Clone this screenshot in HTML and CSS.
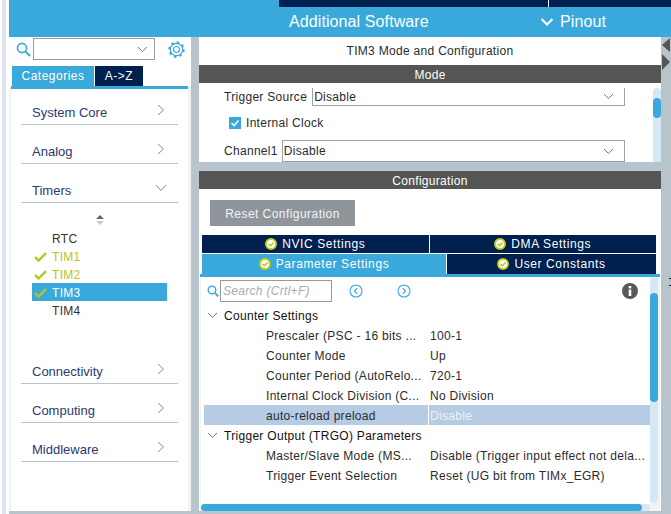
FILE: index.html
```html
<!DOCTYPE html>
<html>
  <head>
    <meta charset="utf-8">
    <title>TIM3 Mode and Configuration</title>
    <link rel="stylesheet" href="styles.css">
  </head>
<body>
  <div class="edge"></div>
  <div class="main">
    <!-- top bar -->
    <div class="topbar">
      <div class="nav-tabs">
        <div class="nav-tab nav-tab-wide"></div>
        <div class="nav-tab"></div>
      </div>
      <div class="nav-row">
        <span class="nav-software">Additional Software</span>
        <span class="nav-pinout">
          <svg width="14" height="10" viewBox="0 0 14 10"><path d="M1.5 2 L7 7.5 L12.5 2" fill="none" stroke="#fff" stroke-width="2"/></svg>
          Pinout
        </span>
      </div>
    </div>

    <div class="workspace">
      <!-- left panel -->
      <div class="sidebar">
        <div class="side-search">
          <svg width="15" height="15" viewBox="0 0 15 15"><circle cx="6" cy="6" r="4.6" fill="none" stroke="#39a9dc" stroke-width="1.6"/><path d="M9.5 9.5 L14 14" stroke="#39a9dc" stroke-width="2"/></svg>
          <div class="combo">
            <svg width="11" height="7" viewBox="0 0 11 7"><path d="M1 1 L5.5 5.5 L10 1" fill="none" stroke="#777" stroke-width="1"/></svg>
          </div>
          <svg class="gear" width="17" height="17" viewBox="0 0 17 17">
            <circle cx="8.5" cy="8.5" r="6.2" fill="none" stroke="#39a9dc" stroke-width="1.2"/>
            <circle cx="8.5" cy="8.5" r="7.2" fill="none" stroke="#39a9dc" stroke-width="2" stroke-dasharray="2.6 3.05"/>
            <circle cx="8.5" cy="8.5" r="3" fill="none" stroke="#39a9dc" stroke-width="1.2"/>
          </svg>
        </div>
        <div class="side-tabs">
          <div class="side-tab side-tab-on">Categories</div>
          <div class="side-tab side-tab-off">A-&gt;Z</div>
        </div>
        <div class="cat-list">
          <div class="cat">System Core
            <svg width="8" height="12" viewBox="0 0 8 12"><path d="M1 1 L6.5 6 L1 11" fill="none" stroke="#888" stroke-width="1"/></svg>
          </div>
          <div class="cat">Analog
            <svg width="8" height="12" viewBox="0 0 8 12"><path d="M1 1 L6.5 6 L1 11" fill="none" stroke="#888" stroke-width="1"/></svg>
          </div>
          <div class="cat">Timers
            <svg class="cat-open" width="12" height="8" viewBox="0 0 12 8"><path d="M1 1 L6 6.5 L11 1" fill="none" stroke="#888" stroke-width="1"/></svg>
          </div>
          <div class="sub-list">
            <div class="sort-arrows">
              <svg width="10" height="12" viewBox="0 0 10 12"><path d="M5 1 L9 5 L1 5 Z" fill="#666"/><path d="M1 7 L9 7 L5 11 Z" fill="#ccc"/></svg>
            </div>
            <div class="sub">RTC</div>
            <div class="sub sub-ok">
              <svg width="13" height="10" viewBox="0 0 13 10"><path d="M1 5 L4.5 8.5 L12 1.2" fill="none" stroke="#b5c61c" stroke-width="2.4"/></svg>
              TIM1
            </div>
            <div class="sub sub-ok">
              <svg width="13" height="10" viewBox="0 0 13 10"><path d="M1 5 L4.5 8.5 L12 1.2" fill="none" stroke="#b5c61c" stroke-width="2.4"/></svg>
              TIM2
            </div>
            <div class="sub sub-ok sub-on">
              <svg width="13" height="10" viewBox="0 0 13 10"><path d="M1 5 L4.5 8.5 L12 1.2" fill="none" stroke="#b5c61c" stroke-width="2.4"/></svg>
              TIM3
            </div>
            <div class="sub">TIM4</div>
          </div>
          <div class="cat">Connectivity
            <svg width="8" height="12" viewBox="0 0 8 12"><path d="M1 1 L6.5 6 L1 11" fill="none" stroke="#888" stroke-width="1"/></svg>
          </div>
          <div class="cat">Computing
            <svg width="8" height="12" viewBox="0 0 8 12"><path d="M1 1 L6.5 6 L1 11" fill="none" stroke="#888" stroke-width="1"/></svg>
          </div>
          <div class="cat">Middleware
            <svg width="8" height="12" viewBox="0 0 8 12"><path d="M1 1 L6.5 6 L1 11" fill="none" stroke="#888" stroke-width="1"/></svg>
          </div>
        </div>
      </div>

      <!-- right panel -->
      <div class="content">
        <div class="mode-panel">
          <div class="panel-title">TIM3 Mode and Configuration</div>
          <div class="panel-head">Mode</div>
          <div class="mode-body">
            <div class="mode-form">
              <div class="form-line form-line-top">
                <span class="form-label">Trigger Source</span>
                <div class="select select-top">Disable
                  <svg width="11" height="7" viewBox="0 0 11 7"><path d="M1 1 L5.5 5.5 L10 1" fill="none" stroke="#777" stroke-width="1"/></svg>
                </div>
              </div>
              <div class="check-line">
                <span class="check">
                  <svg width="12" height="12" viewBox="0 0 12 12"><path d="M2.5 6 L5 8.5 L9.5 3.5" fill="none" stroke="#fff" stroke-width="1.6"/></svg>
                </span>
                Internal Clock
              </div>
              <div class="form-line form-line-low">
                <span class="form-label">Channel1</span>
                <div class="select">Disable
                  <svg width="11" height="7" viewBox="0 0 11 7"><path d="M1 1 L5.5 5.5 L10 1" fill="none" stroke="#777" stroke-width="1"/></svg>
                </div>
              </div>
            </div>
            <div class="mode-scroll"><div class="mode-thumb"></div></div>
          </div>
        </div>

        <div class="config-panel">
          <div class="panel-head">Configuration</div>
          <div class="reset-wrap"><div class="reset-btn">Reset Configuration</div></div>
          <div class="tab-row tab-row-a">
            <div class="tab">
              <svg width="12" height="12" viewBox="0 0 12 12"><circle cx="6" cy="6" r="5" fill="#fff" stroke="#c4cc1e" stroke-width="2"/><path d="M3.5 6 L5.4 7.8 L8.6 4.4" fill="none" stroke="#b5c61c" stroke-width="1.5"/></svg>
              NVIC Settings
            </div>
            <div class="tab">
              <svg width="12" height="12" viewBox="0 0 12 12"><circle cx="6" cy="6" r="5" fill="#fff" stroke="#c4cc1e" stroke-width="2"/><path d="M3.5 6 L5.4 7.8 L8.6 4.4" fill="none" stroke="#b5c61c" stroke-width="1.5"/></svg>
              DMA Settings
            </div>
          </div>
          <div class="tab-row tab-row-b">
            <div class="tab tab-on">
              <svg width="12" height="12" viewBox="0 0 12 12"><circle cx="6" cy="6" r="5" fill="#fff" stroke="#c4cc1e" stroke-width="2"/><path d="M3.5 6 L5.4 7.8 L8.6 4.4" fill="none" stroke="#b5c61c" stroke-width="1.5"/></svg>
              Parameter Settings
            </div>
            <div class="tab">
              <svg width="12" height="12" viewBox="0 0 12 12"><circle cx="6" cy="6" r="5" fill="#fff" stroke="#c4cc1e" stroke-width="2"/><path d="M3.5 6 L5.4 7.8 L8.6 4.4" fill="none" stroke="#b5c61c" stroke-width="1.5"/></svg>
              User Constants
            </div>
          </div>
          <div class="params">
            <div class="tree">
              <div class="toolbar">
                <svg width="12" height="12" viewBox="0 0 12 12"><circle cx="5" cy="5" r="3.8" fill="none" stroke="#39a9dc" stroke-width="1.4"/><path d="M7.8 7.8 L11.3 11.3" stroke="#39a9dc" stroke-width="1.8"/></svg>
                <div class="param-search">Search (Crtl+F)</div>
                <svg class="nav-prev" width="14" height="14" viewBox="0 0 14 14"><circle cx="7" cy="7" r="6" fill="none" stroke="#39a9dc" stroke-width="1.1"/><path d="M8.2 4.2 L5.4 7 L8.2 9.8" fill="none" stroke="#39a9dc" stroke-width="1.2"/></svg>
                <svg class="nav-next" width="14" height="14" viewBox="0 0 14 14"><circle cx="7" cy="7" r="6" fill="none" stroke="#39a9dc" stroke-width="1.1"/><path d="M5.8 4.2 L8.6 7 L5.8 9.8" fill="none" stroke="#39a9dc" stroke-width="1.2"/></svg>
                <svg class="info" width="16" height="16" viewBox="0 0 16 16"><circle cx="8" cy="8" r="8" fill="#58595b"/><rect x="6.7" y="6.6" width="2.6" height="6.4" fill="#fff"/><rect x="6.7" y="3" width="2.6" height="2.4" fill="#fff"/></svg>
              </div>
              <div class="group">
                <svg width="11" height="7" viewBox="0 0 11 7"><path d="M1 1 L5.5 5.5 L10 1" fill="none" stroke="#777" stroke-width="1"/></svg>
                Counter Settings
              </div>
              <div class="param"><span class="param-name">Prescaler (PSC - 16 bits ...</span><span class="param-val">100-1</span></div>
              <div class="param"><span class="param-name">Counter Mode</span><span class="param-val">Up</span></div>
              <div class="param"><span class="param-name">Counter Period (AutoRelo...</span><span class="param-val">720-1</span></div>
              <div class="param"><span class="param-name">Internal Clock Division (C...</span><span class="param-val">No Division</span></div>
              <div class="param param-on"><span class="param-name">auto-reload preload</span><span class="param-val">Disable</span></div>
              <div class="group">
                <svg width="11" height="7" viewBox="0 0 11 7"><path d="M1 1 L5.5 5.5 L10 1" fill="none" stroke="#777" stroke-width="1"/></svg>
                Trigger Output (TRGO) Parameters
              </div>
              <div class="param"><span class="param-name">Master/Slave Mode (MS...</span><span class="param-val">Disable (Trigger input effect not dela...</span></div>
              <div class="param"><span class="param-name">Trigger Event Selection</span><span class="param-val">Reset (UG bit from TIMx_EGR)</span></div>
            </div>
            <div class="vscroll"><div class="vthumb"></div></div>
            <div class="hscroll"><div class="hthumb"></div></div>
          </div>
        </div>
      </div>

      <!-- collapse arrows -->
      <div class="gutter">
        <svg width="10" height="33" viewBox="0 0 10 33"><path d="M9 1 L1 8 L9 15 Z" fill="#545554"/><path d="M1 17 L9 25 L1 33 Z" fill="#545554"/></svg>
        <div class="tick"></div>
        <div class="tick tick-b"></div>
      </div>
    </div>
  </div>
</body>
</html>
```

FILE: styles.css
```css
* {
    box-sizing: border-box;
}
html, body {
    margin: 0;
    height: 100%;
}
body {
    width: 671px;
    height: 514px;
    overflow: hidden;
    display: flex;
    background: #fff;
    font-family: "Liberation Sans", Arial, sans-serif;
    font-size: 12px;
    letter-spacing: 0.3px;
    color: #2b2b2b;
}
.edge {
    width: 9px;
    border-left: 2px solid #fff;
    border-right: 3px solid #fff;
    background: #dfe3f2;
}
.main {
    flex: 1;
    display: flex;
    flex-direction: column;
    min-width: 0;
}

/* top bar */
.topbar {
    height: 37px;
    background: #39a9dc;
    color: #fff;
}
.nav-tabs {
    height: 7px;
    margin-left: 270px;
    display: flex;
    gap: 1px;
    background: #fff;
}
.nav-tab {
    flex: 1;
    background: #00204f;
}
.nav-tab-wide {
    flex: none;
    width: 269px;
}
.nav-row {
    height: 30px;
    display: flex;
    align-items: center;
    padding-left: 280px;
    font-size: 16px;
    letter-spacing: 0.1px;
}
.nav-software {
    width: 251px;
}
.nav-pinout {
    display: flex;
    align-items: center;
    gap: 6px;
}

.workspace {
    flex: 1;
    display: flex;
    background: #b8c4cc;
    min-height: 0;
}

/* left panel */
.sidebar {
    width: 182px;
    background: #f0f2f3;
    margin-bottom: 3px;
    display: flex;
    flex-direction: column;
}
.side-search {
    height: 29px;
    display: flex;
    align-items: center;
    padding: 0 0 5px 7px;
    background: #fff;
}
.combo {
    width: 122px;
    height: 22px;
    margin-left: 2px;
    border: 1px solid #999;
    display: flex;
    align-items: center;
    justify-content: flex-end;
    padding-right: 6px;
}
.gear {
    margin-left: 13px;
}
.side-tabs {
    height: 20px;
    display: flex;
    padding-left: 3px;
    gap: 1px;
    background: #fff;
    color: #fff;
    font-size: 12px;
    letter-spacing: 0.5px;
}
.side-tab {
    display: flex;
    align-items: center;
    justify-content: center;
    padding-bottom: 1px;
}
.side-tab-on {
    width: 82px;
    background: #39a9dc;
}
.side-tab-off {
    width: 48px;
    background: #00204f;
}
.cat-list {
    flex: 1;
    margin: 0 3px 0 2px;
    border-top: 3px solid #39a9dc;
    padding: 0 10px;
    background: #fff;
    color: #2a3a70;
}
.cat {
    height: 28px;
    margin-top: 11px;
    padding: 3px 14px 0 11px;
    border-bottom: 1px solid #b8c4cc;
    font-size: 13px;
    letter-spacing: 0;
    display: flex;
    align-items: center;
    justify-content: space-between;
}
.cat:first-child {
    margin-top: 8px;
}
.cat svg {
    margin-top: -4px;
    margin-right: -1px;
}
.cat .cat-open {
    margin-right: -3px;
}
.sub-list {
    height: 142px;
    padding-left: 11px;
    color: #333;
}
.sort-arrows {
    height: 26px;
    width: 135px;
    display: flex;
    align-items: flex-end;
    justify-content: center;
    padding-bottom: 3px;
}
.sub {
    width: 135px;
    height: 18px;
    padding: 1px 0 0 20px;
    display: flex;
    align-items: center;
}
.sub-ok {
    padding-left: 2px;
    gap: 5px;
    color: #b5c61c;
}
.sub-on {
    background: #39a9dc;
    color: #fff;
}

/* right panel */
.content {
    width: 462px;
    margin-left: 8px;
    display: flex;
    flex-direction: column;
    gap: 9px;
}
.mode-panel {
    height: 125px;
    background: #fff;
    display: flex;
    flex-direction: column;
}
.panel-title {
    height: 28px;
    display: flex;
    align-items: center;
    justify-content: center;
}
.panel-head {
    height: 18px;
    flex: none;
    padding-top: 1px;
    background: #545554;
    color: #fff;
    display: flex;
    align-items: center;
    justify-content: center;
}
.mode-body {
    flex: 1;
    display: flex;
    min-height: 0;
}
.mode-form {
    flex: 1;
    padding: 5px 28px 0 25px;
}
.form-line {
    display: flex;
    align-items: center;
    gap: 4px;
}
.form-line-top {
    height: 18px;
}
.form-line-low {
    padding-top: 1px;
}
.form-label {
    flex: none;
}
.select {
    flex: 1;
    height: 22px;
    padding: 0 10px 0 1px;
    border: 1px solid #9aa3a8;
    display: flex;
    align-items: center;
    justify-content: space-between;
}
.select-top {
    height: 18px;
    margin-left: 1px;
    border-top: none;
}
.check-line {
    height: 33px;
    padding-left: 5px;
    display: flex;
    align-items: center;
    gap: 5px;
}
.check {
    width: 12px;
    height: 12px;
    background: #39a9dc;
    display: flex;
}
.mode-scroll {
    width: 8px;
    margin-top: 5px;
    background: #d6e7f6;
    border-radius: 4px 4px 0 0;
}
.mode-thumb {
    height: 20px;
    margin-top: 10px;
    background: #39a9dc;
    border-radius: 4px;
}
.config-panel {
    flex: 1;
    margin-bottom: 3px;
    background: #fff;
    display: flex;
    flex-direction: column;
    min-height: 0;
}
.reset-wrap {
    padding: 11px 0 9px 11px;
}
.reset-btn {
    width: 145px;
    height: 26px;
    padding-top: 1px;
    background: #8e969c;
    color: #f4f4f4;
    letter-spacing: 0.45px;
    display: flex;
    align-items: center;
    justify-content: center;
}
.tab-row {
    display: flex;
    gap: 1px;
    margin: 0 5px 0 3px;
    color: #fff;
    letter-spacing: 0.6px;
}
.tab-row-a {
    height: 18px;
    margin-bottom: 1px;
}
.tab-row-b {
    height: 20px;
}
.tab {
    flex: 1;
    background: #00204f;
    display: flex;
    align-items: center;
    justify-content: center;
    gap: 5px;
}
.tab-on {
    flex: none;
    width: 244px;
    background: #39a9dc;
}
.params {
    flex: 1;
    margin: 0 1px;
    border-top: 3px solid #39a9dc;
    background: #f0f2f3;
    display: grid;
    grid-template-columns: 449px 8px;
    grid-template-rows: 1fr 7px;
    padding-left: 1px;
    min-height: 0;
}
.tree {
    background: #fff;
    min-height: 0;
    overflow: hidden;
}
.toolbar {
    height: 28px;
    display: flex;
    align-items: center;
    padding-left: 6px;
}
.param-search {
    width: 112px;
    height: 22px;
    margin-left: 1px;
    padding-left: 2px;
    border: 1px solid #999;
    color: #aaa;
    font-style: italic;
    display: flex;
    align-items: center;
}
.nav-prev {
    margin-left: 17px;
}
.nav-next {
    margin-left: 34px;
}
.info {
    margin-left: 211px;
}
.group {
    height: 20px;
    padding: 1px 0 0 6px;
    display: flex;
    align-items: center;
    gap: 6px;
    color: #111;
}
.param {
    height: 20px;
    margin-left: 3px;
    display: flex;
    align-items: center;
}
.param-name {
    width: 224px;
    padding: 1px 0 0 62px;
    white-space: nowrap;
    flex: none;
}
.param-val {
    flex: 1;
    height: 100%;
    padding: 1px 0 0 2px;
    display: flex;
    align-items: center;
    white-space: nowrap;
}
.param-on {
    background: #b5cce4;
}
.param-on .param-val {
    color: #eef3f8;
    border-left: 1px solid #fff;
    padding-left: 1px;
}
.vscroll {
    grid-row: 1 / 3;
    grid-column: 2;
    margin-bottom: 8px;
    background: #d6e7f6;
    border-radius: 4px;
    padding-top: 16px;
}
.vthumb {
    height: 109px;
    background: #39a9dc;
    border-radius: 4px;
}
.hscroll {
    grid-row: 2;
    grid-column: 1;
    background: #d6e7f6;
    border-radius: 4px;
}
.hthumb {
    height: 100%;
    width: 441px;
    background: #39a9dc;
    border-radius: 4px;
}
.gutter {
    width: 10px;
    display: flex;
    flex-direction: column;
    align-items: flex-end;
}
.tick {
    width: 2px;
    height: 1px;
    margin-top: 208px;
    background: #222;
}
.tick-b {
    margin-top: 6px;
}
```
